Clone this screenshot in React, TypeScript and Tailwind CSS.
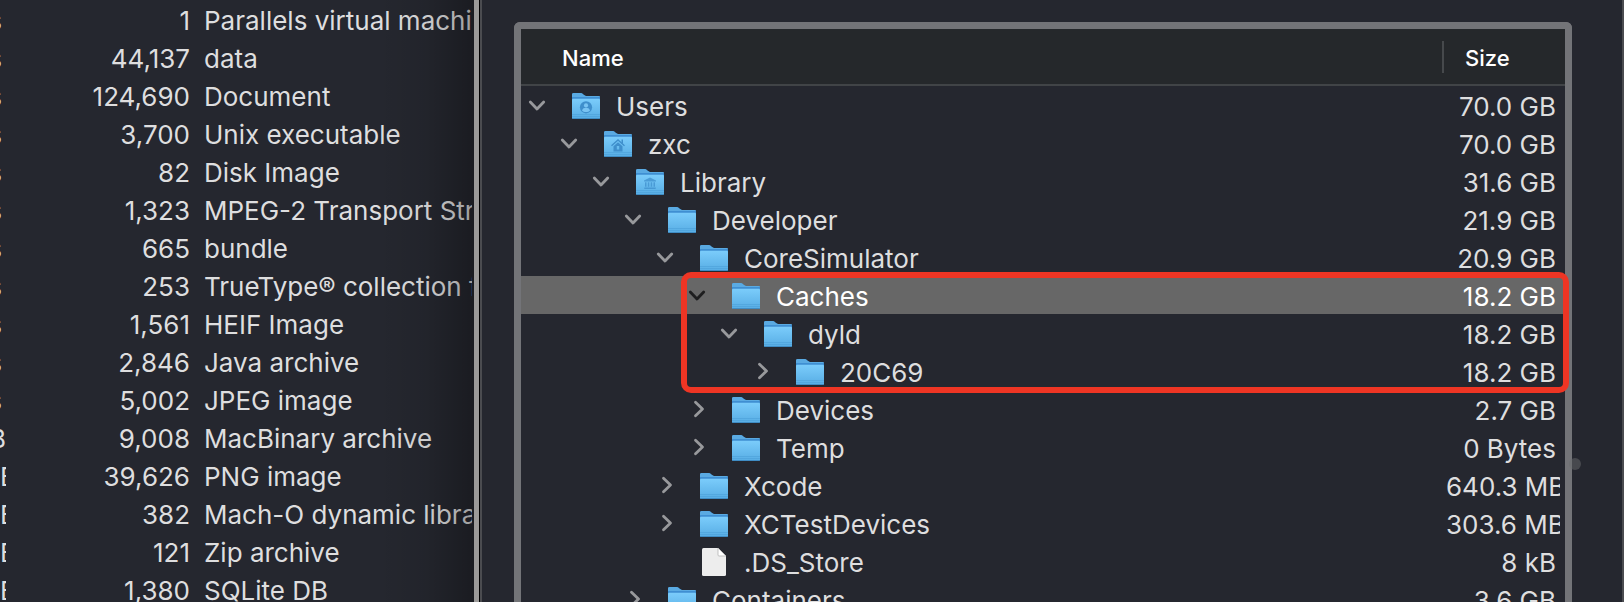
type Kind = 'users' | 'home' | 'library' | 'folder' | 'file';
type Node = { name: string; size: string; level: number; kind: Kind; state?: 'open' | 'closed'; selected?: boolean };

const nodes: Node[] = [
  { name: 'Users', size: '70.0 GB', level: 0, kind: 'users', state: 'open' },
  { name: 'zxc', size: '70.0 GB', level: 1, kind: 'home', state: 'open' },
  { name: 'Library', size: '31.6 GB', level: 2, kind: 'library', state: 'open' },
  { name: 'Developer', size: '21.9 GB', level: 3, kind: 'folder', state: 'open' },
  { name: 'CoreSimulator', size: '20.9 GB', level: 4, kind: 'folder', state: 'open' },
  { name: 'Caches', size: '18.2 GB', level: 5, kind: 'folder', state: 'open', selected: true },
  { name: 'dyld', size: '18.2 GB', level: 6, kind: 'folder', state: 'open' },
  { name: '20C69', size: '18.2 GB', level: 7, kind: 'folder', state: 'closed' },
  { name: 'Devices', size: '2.7 GB', level: 5, kind: 'folder', state: 'closed' },
  { name: 'Temp', size: '0 Bytes', level: 5, kind: 'folder', state: 'closed' },
  { name: 'Xcode', size: '640.3 MB', level: 4, kind: 'folder', state: 'closed' },
  { name: 'XCTestDevices', size: '303.6 MB', level: 4, kind: 'folder', state: 'closed' },
  { name: '.DS_Store', size: '8 kB', level: 4, kind: 'file' },
  { name: 'Containers', size: '3.6 GB', level: 3, kind: 'folder', state: 'closed' },
];

type Unit = { text: string; align: string };
const bytes: Unit = { text: 's', align: 'justify-end pr-1' };
const kilo: Unit = { text: 'B', align: 'justify-end' };
const mega: Unit = { text: 'B', align: 'justify-start' };

const kinds: [Unit, string, string][] = [
  [bytes, '1', 'Parallels virtual machine'],
  [bytes, '44,137', 'data'],
  [bytes, '124,690', 'Document'],
  [bytes, '3,700', 'Unix executable'],
  [bytes, '82', 'Disk Image'],
  [bytes, '1,323', 'MPEG-2 Transport Stream'],
  [bytes, '665', 'bundle'],
  [bytes, '253', 'TrueType® collection font'],
  [bytes, '1,561', 'HEIF Image'],
  [bytes, '2,846', 'Java archive'],
  [bytes, '5,002', 'JPEG image'],
  [kilo, '9,008', 'MacBinary archive'],
  [mega, '39,626', 'PNG image'],
  [mega, '382', 'Mach-O dynamic library'],
  [mega, '121', 'Zip archive'],
  [mega, '1,380', 'SQLite DB'],
];

function Glyph({ kind }: { kind: Kind }) {
  if (kind === 'users')
    return (
      <g>
        <circle cx="14" cy="14.3" r="6.1" fill="#3f8fcc" />
        <circle cx="14" cy="12.4" r="2.1" fill="#79c4f3" />
        <path d="M10 17.4c.6-2 2.1-2.7 4-2.7s3.4.7 4 2.7c-1 1.1-2.4 1.7-4 1.7s-3-.6-4-1.7z" fill="#79c4f3" />
      </g>
    );
  if (kind === 'home')
    return (
      <g fill="#3f8fcc">
        <path d="M7.5 14.8 14 9l6.5 5.8" fill="none" stroke="#3f8fcc" strokeWidth="1.4" />
        <path d="M17.5 8.5H19V13l-1.5-1.4z" />
        <path fillRule="evenodd" d="M9.5 15.2 14 11.2l4.500 4V20.5h-9zM12.8 15v3.6h2.4V15z" />
      </g>
    );
  if (kind === 'library')
    return (
      <path
        d="M14 8.5l6 3v1H8v-1zM9 13.3h1.5v4.5H9zM11.8 13.3h1.5v4.5h-1.5zM14.7 13.3h1.5v4.5h-1.5zM17.5 13.3H19v4.5h-1.5zM8.3 18.5h11.4V20H8.3z"
        fill="#3f8fcc"
        opacity=".75"
      />
    );
  return null;
}

function NodeIcon({ kind }: { kind: Kind }) {
  if (kind === 'file')
    return (
      <svg className="h-7 w-7 shrink-0" viewBox="0 0 28 28" aria-hidden="true">
        <path d="M3.5 0H18l8 8v18.5q0 1.5-1.5 1.5h-21Q2 28 2 26.5v-25Q2 0 3.5 0z" fill="#ededed" />
        <path d="M18 0l8 8h-7q-1 0-1-1z" fill="#fff" stroke="#b4b4b4" strokeWidth=".8" />
      </svg>
    );
  return (
    <svg className="h-[26px] w-7 shrink-0" viewBox="0 0 28 26" aria-hidden="true">
      <defs>
        <linearGradient id="folderFront" x1="0" y1="0" x2="0" y2="1">
          <stop offset="0" stopColor="#7bccfb" />
          <stop offset="1" stopColor="#57ade4" />
        </linearGradient>
      </defs>
      <path d="M0 1.5Q0 0 1.5 0h7q1.2 0 2 .8l1.4 1.3q.8.8 2 .8H26.5Q28 3 28 4.5V12H0z" fill="#3f8fd2" />
      <path d="M0 1.5Q0 0 1.5 0h7q1.2 0 2 .8l1.4 1.3q.8.8 2 .8H26.5Q28 3 28 4H0z" fill="#5aaae2" />
      <path d="M0 7q0-1.300 1.3-1.3h25.4Q28 5.7 28 7v17.5Q28 26 26.5 26h-25Q0 26 0 24.5z" fill="url(#folderFront)" />
      <path d="M0 21.5h28M0 23.5h28" stroke="#4c9fd8" strokeWidth=".6" />
      <path d="M.3 25.5h27.4" stroke="#3f8cc4" strokeWidth="1" />
      <Glyph kind={kind} />
    </svg>
  );
}

function Toggle({ node }: { node: Node }) {
  if (!node.state) return <span className="w-5 shrink-0" />;
  const open = node.state === 'open';
  return (
    <button
      type="button"
      aria-expanded={open}
      aria-label={node.name}
      className={`flex h-5 w-5 shrink-0 items-center justify-center ${node.selected ? 'text-[#1e1e1f]' : 'text-[#98999c]'}`}
    >
      <svg className="h-5 w-5" viewBox="0 0 20 20" fill="none" stroke="currentColor" strokeWidth="2.8" strokeLinecap="round" strokeLinejoin="round" aria-hidden="true">
        {open ? <path d="M3.3 7 10 14l6.7-7" /> : <path d="M8.5 3.3 15.5 10l-7 6.7" />}
      </svg>
    </button>
  );
}

function KindsTable() {
  return (
    <section className="relative w-[474px] shrink-0 overflow-hidden pr-0.5">
      <table className="w-full table-fixed border-separate border-spacing-0">
        <colgroup>
          <col className="w-1.5" />
          <col className="w-[184px]" />
          <col />
        </colgroup>
        <tbody>
          {kinds.map(([unit, count, name]) => (
            <tr key={name} className="h-[38px]">
              <td className="p-0">
                <div className={`flex overflow-hidden pt-1 ${unit.align}`}>{unit.text}</div>
              </td>
              <td className="p-0 pt-1 text-right">{count}</td>
              <td className="p-0 pt-1 whitespace-nowrap">
                <div className="overflow-hidden pl-3.5">{name}</div>
              </td>
            </tr>
          ))}
        </tbody>
      </table>
      <div className="pointer-events-none absolute inset-y-0 right-0 w-24 bg-linear-to-r from-transparent via-black/8 to-black/30" />
    </section>
  );
}

function TreeTable() {
  return (
    <table className="w-full table-fixed border-separate border-spacing-0">
      <colgroup>
        <col />
        <col className="w-[123px]" />
      </colgroup>
      <thead>
        <tr className="h-[57px] bg-[#25282b] text-[22px] text-white">
          <th scope="col" className="border-b-2 border-[#414447] p-0 pt-0.5 pl-[41px] text-left font-medium">
            Name
          </th>
          <th scope="col" className="border-b-2 border-[#414447] p-0 text-left font-medium">
            <div className="flex h-8 items-center border-l-2 border-[#46494c] pt-0.5 pl-[21px]">Size</div>
          </th>
        </tr>
      </thead>
      <tbody>
        {nodes.map((node) => (
          <tr key={node.name} className={`h-[38px] ${node.selected ? 'bg-[#676767] text-white' : ''}`}>
            <td className="p-0">
              <div className="flex items-center pl-1.5">
                {Array.from({ length: node.level }, (_, i) => (
                  <span key={i} className="w-8 shrink-0" />
                ))}
                <Toggle node={node} />
                <span className="ml-[25px] flex items-center gap-4 whitespace-nowrap">
                  <span className="pt-0.5">
                    <NodeIcon kind={node.kind} />
                  </span>
                  <span className="pt-1">{node.name}</span>
                </span>
              </div>
            </td>
            <td className="p-0 pr-[5px] pl-1">
              <div className="overflow-hidden pt-1 pr-1 text-right whitespace-nowrap">{node.size}</div>
            </td>
          </tr>
        ))}
      </tbody>
    </table>
  );
}

export default function App() {
  return (
    <main className="flex h-screen overflow-hidden bg-[#25272f] font-[Inter,'Liberation_Sans',sans-serif] text-[26px] leading-8 text-[#dededf]">
      <KindsTable />
      <div className="w-[6px] shrink-0 border-r border-black bg-[#9b9a99]" />
      <section className="min-w-0 flex-1 border-x-2 border-[#4b4c50] pt-[22px] pr-[50px] pl-8">
        <div className="relative rounded-t-md border-[7px] border-b-0 border-[#737478]">
          <div className="h-screen overflow-hidden">
            <TreeTable />
          </div>
          <div className="pointer-events-none absolute top-[243px] -right-1 left-40 h-[121px] rounded-[10px] border-[6px] border-[#ee3524]" />
          <div className="pointer-events-none absolute top-[429px] -right-4 h-3 w-3 rounded-full bg-[#6a6b6e]/50" />
        </div>
      </section>
    </main>
  );
}
